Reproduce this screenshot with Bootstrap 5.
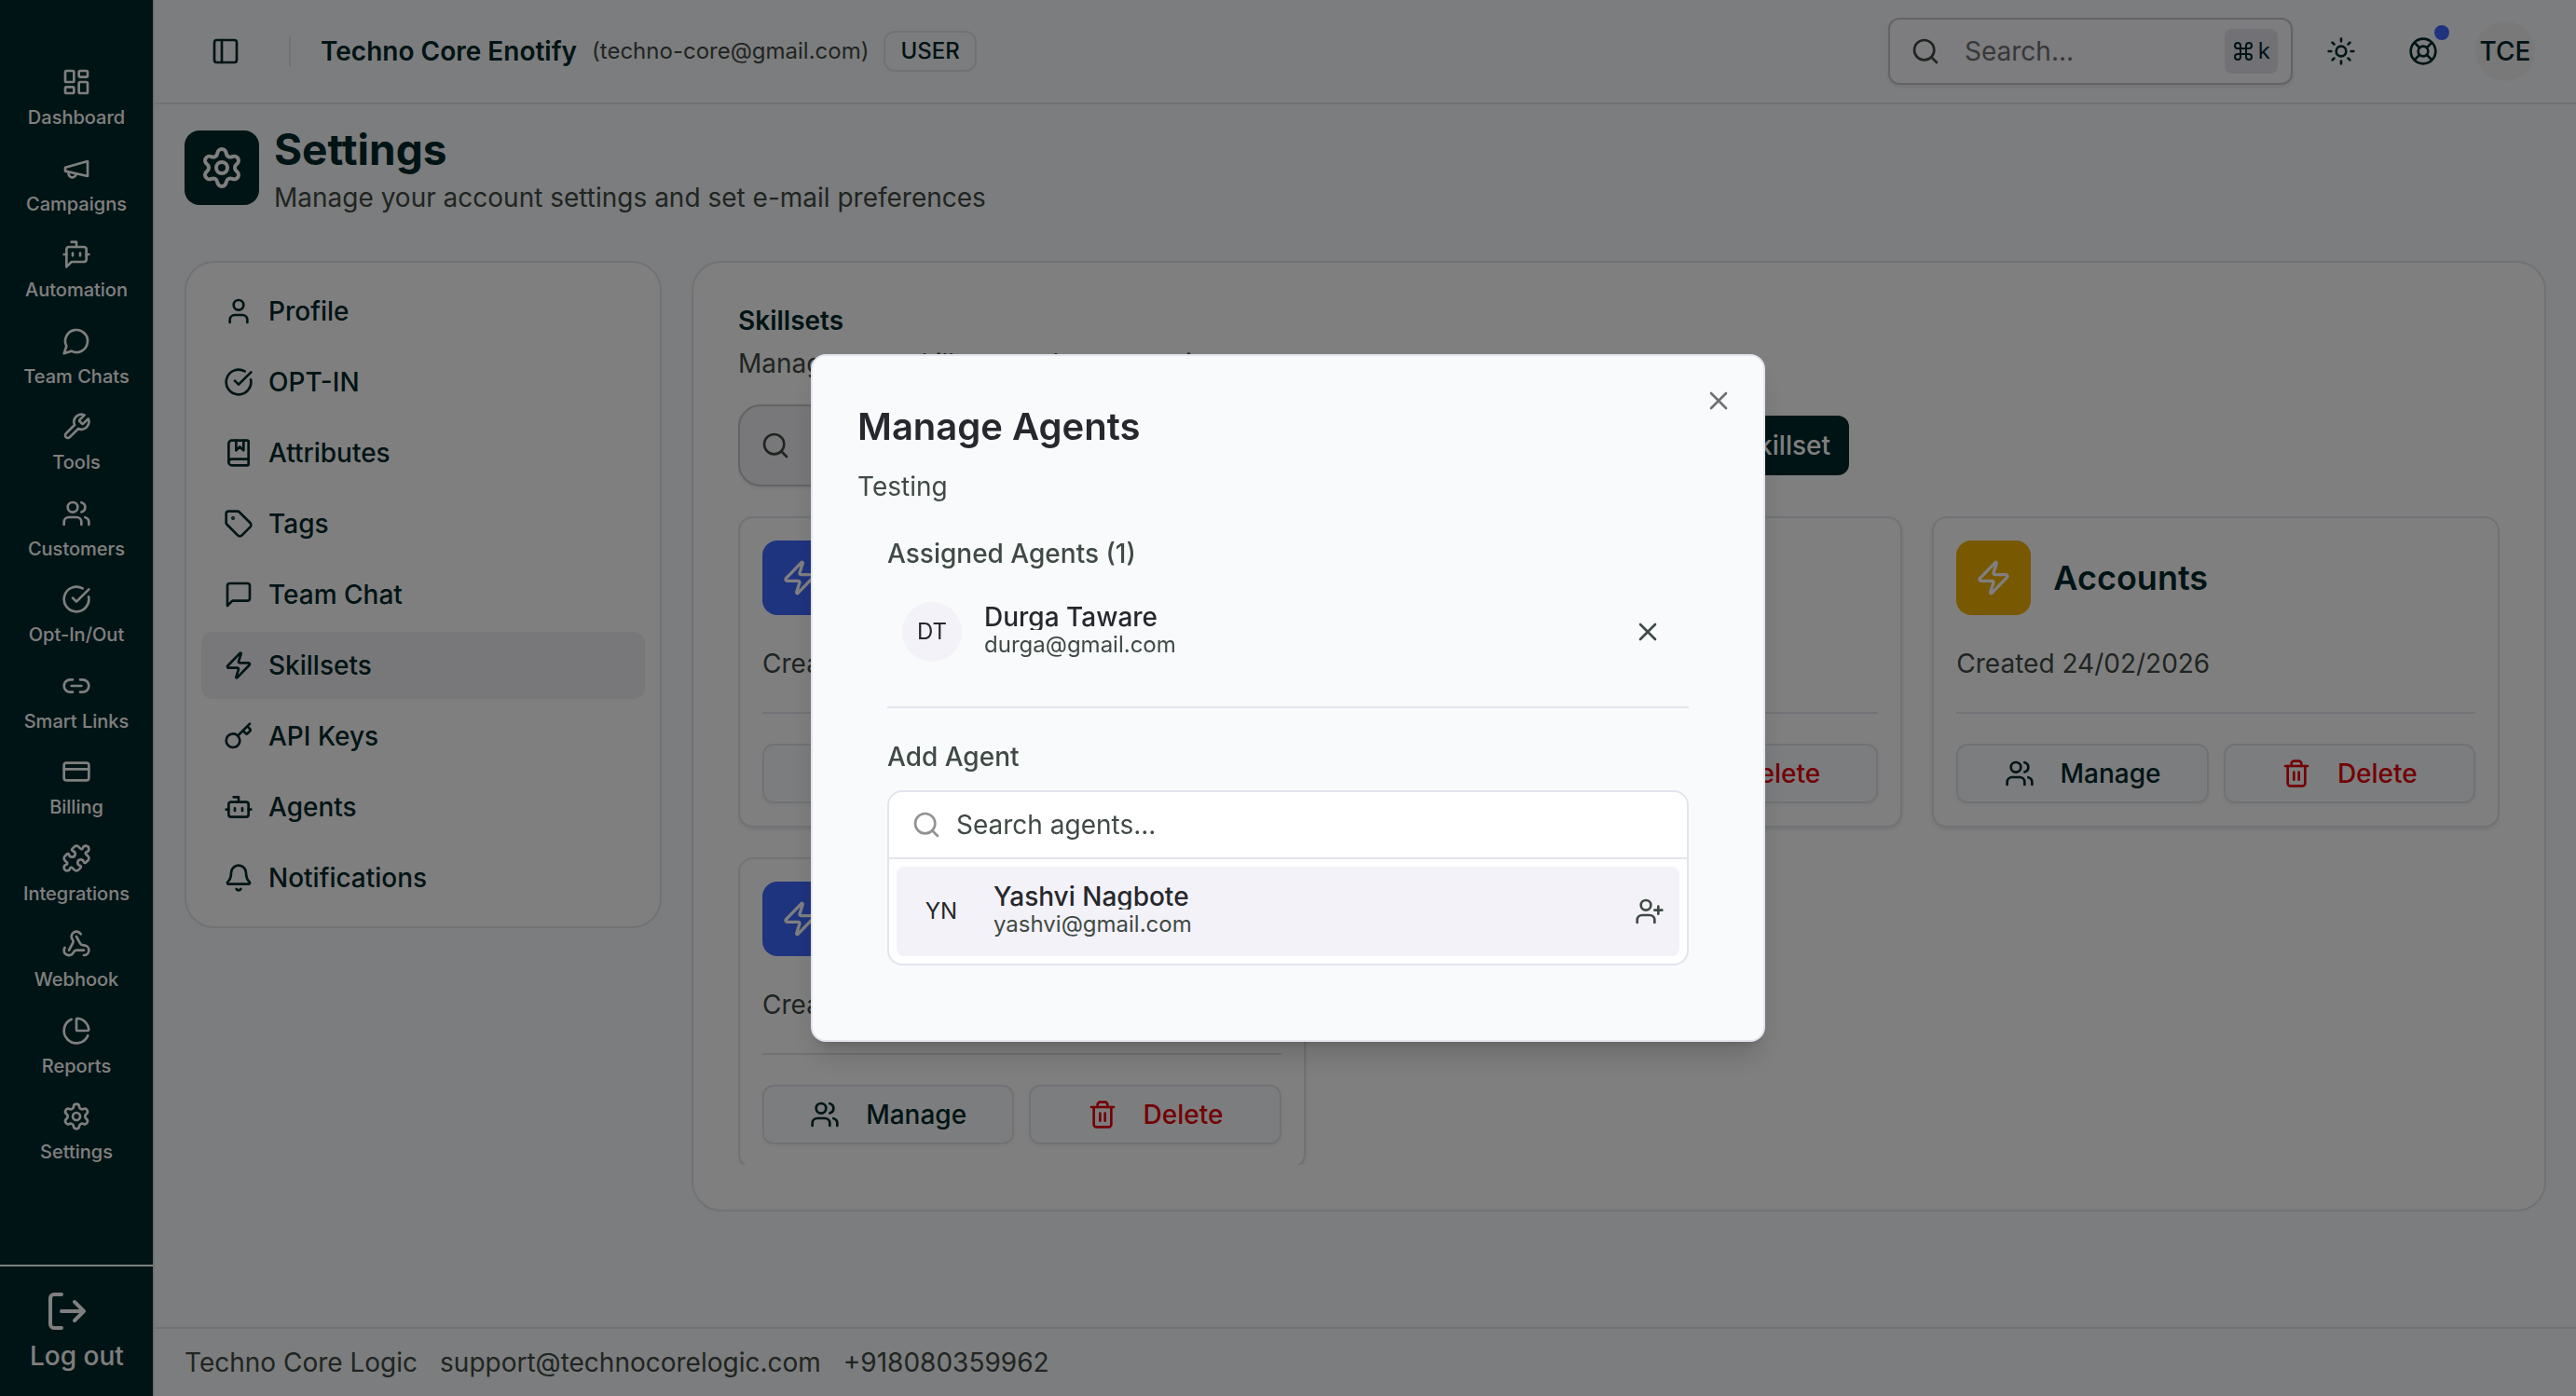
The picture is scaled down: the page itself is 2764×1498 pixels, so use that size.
<!DOCTYPE html>
<html lang="en">
<head>
<meta charset="utf-8">
<meta name="viewport" content="width=device-width, initial-scale=1">
<title>Settings – Skillsets</title>
<link href="https://cdn.jsdelivr.net/npm/bootstrap@5.3.0/dist/css/bootstrap.min.css" rel="stylesheet">
<style>
:root{--ink:#01282b;--muted-ink:#404a45;--line:#e3e4ed;--page:#f8fafc;--soft:#f3f2f8;--danger-ink:#e7000b}
body{font-family:Inter,"Noto Sans",sans-serif;font-size:28px;line-height:40px;color:var(--ink);background:var(--page);overflow:hidden}
a{text-decoration:none;color:inherit}
button{font:inherit;color:inherit}
.ico{width:32px;height:32px;flex:none;fill:none;stroke:currentColor;stroke-width:2;stroke-linecap:round;stroke-linejoin:round}
.ico-lg{width:48px;height:48px}
.skill-ico{width:40px;height:40px}
.w500{font-weight:500}
.muted{color:var(--muted-ink)}
.fs-24{font-size:24px;line-height:32px}
.shell{height:100vh}
.side{width:166px;background:var(--ink);color:#fff;border-right:2px solid var(--line);flex:none}
.side-list{padding:72px 0 82px;margin:0;list-style:none;flex:1;min-height:0}
.side-list a{font-size:20px;line-height:32px;gap:6px;font-weight:500}
.logout{border:0;border-top:2px solid #fff;background:none;padding:24px 0 12px 32px;height:141px;gap:4px}
.logout .ico{margin-left:16px}
.topbar{height:112px;border-bottom:2px solid var(--line);padding:0 44px 0 60px;flex:none}
.bare{background:none;border:0;padding:0;line-height:0}
.vr-line{width:2px;height:32px;background:var(--line);margin:0 32px 0 52px}
.role{border:2px solid var(--line);border-radius:12px;padding:4px 16px}
.field{border:2px solid #c6c6ca;background:#fbf9fc;box-shadow:0 2px 4px rgba(0,0,0,.08);flex:none}
.field input,.cmd input{border:0;background:none;outline:0;min-width:0;padding:0;color:inherit}
.field input::placeholder{color:#6f7175;opacity:1}
.cmd input::placeholder{color:var(--muted-ink);opacity:1}
.top-search{width:434px;height:72px;border-radius:12px;padding:0 14px 0 22px;gap:26px}
.top-search .ico,.main-search .ico{color:var(--muted-ink)}
.top-search .keycap .ico{color:var(--ink)}
.keycap{background:#e4e2ec;border-radius:8px;height:48px;padding:0 8px;font-size:24px;gap:4px}
.keycap .ico{width:24px;height:24px}
.top-btn{margin-left:36px}
.help{position:relative;margin:0 56px}
.help-dot{position:absolute;left:28px;top:-12px;width:16px;height:16px;border-radius:50%;background:#3f68ff}
.round{width:64px;height:64px;border-radius:50%;background:var(--soft);flex:none}
.topbar .round{margin-left:-16px;background:#f4f2f3}
.content-area{padding:16px 32px 0;flex:1;min-height:0}
.tile{width:80px;height:80px;border-radius:16px;color:#fff;background:var(--ink);flex:none}
.page-title{font-size:46px;line-height:64px;font-weight:700;margin:0}
.body-row{gap:32px}
.panel{background:#fff;border:2px solid var(--line);border-radius:32px}
.menu-panel{width:512px;padding:16px;flex:none}
.menu-panel a{height:72px;padding:0 24px;gap:16px;border-radius:12px}
.menu-panel a.active{background:#f1f1f5}
.skills-panel{flex:1;min-width:0;padding:48px;height:calc(100vh - 478px)}
.clip{overflow:hidden;height:100%}
.heading-sm{font-size:28px;line-height:28px;font-weight:600;margin:0 0 12px}
.tools{gap:16px;margin-bottom:32px}
.main-search{width:896px;height:88px;border-radius:24px;padding:0 22px;gap:24px;background:#f1f0f4}
.add-slot{width:280px}
.btn-ink{background:var(--ink);color:#fff;border:0;border-radius:12px;height:64px;padding:0 20px;gap:16px}
.skill-grid{display:grid;grid-template-columns:repeat(3,minmax(0,1fr));gap:32px}
.skill{border:2px solid var(--line);border-radius:16px;padding:24px;box-shadow:0 2px 4px rgba(0,0,0,.1)}
.skill h3{font-size:36px;line-height:40px;font-weight:600;margin:0}
.skill-date{margin:32px 0}
.skill-actions{border-top:2px solid var(--line);padding-top:32px}
.btn-line{background:var(--page);border:2px solid var(--line);border-radius:12px;height:64px;gap:28px;flex:1;padding:0;box-shadow:0 2px 4px rgba(0,0,0,.05)}
.btn-line.del{color:var(--danger-ink)}
.foot{border-top:2px solid var(--line);height:74px;padding:0 32px;gap:24px;flex:none;background:var(--page)}
.agents-dialog{max-width:1024px;--bs-modal-margin:0px}
.agents-dialog .modal-content{background:#f8fafc;border:2px solid var(--line);border-radius:16px;padding:48px;color:#26282d;box-shadow:0 20px 30px -6px rgba(0,0,0,.16),0 8px 12px -8px rgba(0,0,0,.16)}
.modal-close{position:absolute;right:32px;top:32px;color:#6f7073}
.agents-dialog h2{font-size:40px;line-height:56px;font-weight:600;margin:0 0 16px}
.agents-body{padding:32px}
.agent{padding:16px;gap:24px}
.agent-name{line-height:28px;overflow:hidden;font-weight:500}
.remove-agent{margin-right:12px}
.sep{height:2px;background:var(--line);margin:32px 0}
.cmd{background:#fff;border:2px solid var(--line);border-radius:16px;margin-top:16px;overflow:hidden}
.cmd-row{height:72px;border-bottom:2px solid var(--line);padding:0 24px;gap:16px}
.cmd-row .ico{opacity:.5}
.cmd-item{background:var(--soft);border:0;border-radius:8px;margin:8px;text-align:left}
</style>
<script src="https://cdn.jsdelivr.net/npm/bootstrap@5.3.0/dist/js/bootstrap.bundle.min.js"></script>
</head>
<body>
<svg width="0" height="0" class="d-none" aria-hidden="true">
<symbol id="i-dash" viewBox="0 0 24 24"><rect width="7" height="9" x="3" y="3" rx="1"/><rect width="7" height="5" x="14" y="3" rx="1"/><rect width="7" height="9" x="14" y="12" rx="1"/><rect width="7" height="5" x="3" y="16" rx="1"/></symbol>
<symbol id="i-mega" viewBox="0 0 24 24"><path d="m3 11 18-5v12L3 14v-3z"/><path d="M11.6 16.8a3 3 0 1 1-5.8-1.6"/></symbol>
<symbol id="i-botmsg" viewBox="0 0 24 24"><path d="M12 6V2H8"/><path d="m8 18-4 4V8a2 2 0 0 1 2-2h12a2 2 0 0 1 2 2v8a2 2 0 0 1-2 2Z"/><path d="M2 12h2M9 11v2M15 11v2M20 12h2"/></symbol>
<symbol id="i-chat" viewBox="0 0 24 24"><path d="M7.9 20A9 9 0 1 0 4 16.1L2 22Z"/></symbol>
<symbol id="i-wrench" viewBox="0 0 24 24"><path d="M14.7 6.3a1 1 0 0 0 0 1.4l1.6 1.6a1 1 0 0 0 1.4 0l3.77-3.77a6 6 0 0 1-7.94 7.94l-6.91 6.91a2.12 2.12 0 0 1-3-3l6.91-6.91a6 6 0 0 1 7.94-7.94l-3.76 3.76z"/></symbol>
<symbol id="i-users" viewBox="0 0 24 24"><path d="M16 21v-2a4 4 0 0 0-4-4H6a4 4 0 0 0-4 4v2"/><circle cx="9" cy="7" r="4"/><path d="M22 21v-2a4 4 0 0 0-3-3.87"/><path d="M16 3.13a4 4 0 0 1 0 7.75"/></symbol>
<symbol id="i-check" viewBox="0 0 24 24"><path d="M21.801 10A10 10 0 1 1 17 3.335"/><path d="m9 11 3 3L22 4"/></symbol>
<symbol id="i-link" viewBox="0 0 24 24"><path d="M9 17H7A5 5 0 0 1 7 7h2"/><path d="M15 7h2a5 5 0 1 1 0 10h-2"/><path d="M8 12h8"/></symbol>
<symbol id="i-card" viewBox="0 0 24 24"><rect width="20" height="14" x="2" y="5" rx="2"/><path d="M2 10h20"/></symbol>
<symbol id="i-puzzle" viewBox="0 0 24 24"><path d="M15.39 4.39a1 1 0 0 0 1.68-.474 2.5 2.5 0 1 1 3.014 3.015 1 1 0 0 0-.474 1.68l1.683 1.682a2.414 2.414 0 0 1 0 3.414L19.61 15.39a1 1 0 0 1-1.68-.474 2.5 2.5 0 1 0-3.014 3.015 1 1 0 0 1 .474 1.68l-1.683 1.682a2.414 2.414 0 0 1-3.414 0L8.61 19.61a1 1 0 0 0-1.68.474 2.5 2.5 0 1 1-3.014-3.015 1 1 0 0 0 .474-1.68l-1.683-1.682a2.414 2.414 0 0 1 0-3.414L4.39 8.61a1 1 0 0 1 1.68.474 2.5 2.5 0 1 0 3.014-3.015 1 1 0 0 1-.474-1.68l1.683-1.682a2.414 2.414 0 0 1 3.414 0z"/></symbol>
<symbol id="i-hook" viewBox="0 0 24 24"><path d="M18 16.98h-5.99c-1.1 0-1.95.94-2.48 1.9A4 4 0 0 1 2 17c.01-.7.2-1.4.57-2"/><path d="m6 17 3.13-5.78c.53-.97.1-2.18-.5-3.1a4 4 0 1 1 6.89-4.06"/><path d="m12 6 3.13 5.73C15.66 12.7 16.9 13 18 13a4 4 0 0 1 0 8"/></symbol>
<symbol id="i-pie" viewBox="0 0 24 24"><path d="M21 12c.552 0 1.005-.449.95-.998a10 10 0 0 0-8.953-8.951c-.55-.055-.998.398-.998.95v8a1 1 0 0 0 1 1z"/><path d="M21.21 15.89A10 10 0 1 1 8 2.83"/></symbol>
<symbol id="i-gear" viewBox="0 0 24 24"><path d="M9.671 4.136a2.34 2.34 0 0 1 4.659 0 2.34 2.34 0 0 0 3.319 1.915 2.34 2.34 0 0 1 2.33 4.033 2.34 2.34 0 0 0 0 3.831 2.34 2.34 0 0 1-2.33 4.033 2.34 2.34 0 0 0-3.319 1.915 2.34 2.34 0 0 1-4.659 0 2.34 2.34 0 0 0-3.32-1.915 2.34 2.34 0 0 1-2.33-4.033 2.34 2.34 0 0 0 0-3.831A2.34 2.34 0 0 1 6.35 6.051a2.34 2.34 0 0 0 3.319-1.915"/><circle cx="12" cy="12" r="3"/></symbol>
<symbol id="i-out" viewBox="0 0 24 24"><path d="M9 21H5a2 2 0 0 1-2-2V5a2 2 0 0 1 2-2h4"/><path d="m16 17 5-5-5-5M21 12H9"/></symbol>
<symbol id="i-panel" viewBox="0 0 24 24"><rect width="18" height="18" x="3" y="3" rx="2"/><path d="M9 3v18"/></symbol>
<symbol id="i-search" viewBox="0 0 24 24"><circle cx="11" cy="11" r="8"/><path d="m21 21-4.3-4.3"/></symbol>
<symbol id="i-cmd" viewBox="0 0 24 24"><path d="M15 6v12a3 3 0 1 0 3-3H6a3 3 0 1 0 3 3V6a3 3 0 1 0-3 3h12a3 3 0 1 0-3-3"/></symbol>
<symbol id="i-sun" viewBox="0 0 24 24"><circle cx="12" cy="12" r="4"/><path d="M12 2v2M12 20v2M4.93 4.93l1.41 1.41M17.66 17.66l1.41 1.41M2 12h2M20 12h2M6.34 17.66l-1.41 1.41M19.07 4.93l-1.41 1.41"/></symbol>
<symbol id="i-buoy" viewBox="0 0 24 24"><circle cx="12" cy="12" r="10"/><path d="m4.93 4.93 4.24 4.24M14.83 9.17l4.24-4.24M14.83 14.83l4.24 4.24M9.17 14.83l-4.24 4.24"/><circle cx="12" cy="12" r="4"/></symbol>
<symbol id="i-user" viewBox="0 0 24 24"><path d="M19 21v-2a4 4 0 0 0-4-4H9a4 4 0 0 0-4 4v2"/><circle cx="12" cy="7" r="4"/></symbol>
<symbol id="i-book" viewBox="0 0 24 24"><path d="M10 2v8l3-3 3 3V2"/><path d="M4 19.5v-15A2.5 2.5 0 0 1 6.5 2H19a1 1 0 0 1 1 1v18a1 1 0 0 1-1 1H6.5a1 1 0 0 1 0-5H20"/></symbol>
<symbol id="i-tag" viewBox="0 0 24 24"><path d="M12.586 2.586A2 2 0 0 0 11.172 2H4a2 2 0 0 0-2 2v7.172a2 2 0 0 0 .586 1.414l8.704 8.704a2.426 2.426 0 0 0 3.42 0l6.58-6.58a2.426 2.426 0 0 0 0-3.42z"/><circle cx="7.5" cy="7.5" r=".5" fill="currentColor"/></symbol>
<symbol id="i-msg" viewBox="0 0 24 24"><path d="M21 15a2 2 0 0 1-2 2H7l-4 4V5a2 2 0 0 1 2-2h14a2 2 0 0 1 2 2z"/></symbol>
<symbol id="i-zap" viewBox="0 0 24 24"><path d="M4 14a1 1 0 0 1-.78-1.63l9.9-10.2a.5.5 0 0 1 .86.46l-1.92 6.02A1 1 0 0 0 13 10h7a1 1 0 0 1 .78 1.63l-9.9 10.2a.5.5 0 0 1-.86-.46l1.92-6.02A1 1 0 0 0 11 14z"/></symbol>
<symbol id="i-key" viewBox="0 0 24 24"><path d="m15.5 7.5 2.3 2.3a1 1 0 0 0 1.4 0l2.1-2.1a1 1 0 0 0 0-1.4L19 4"/><path d="m21 2-9.6 9.6"/><circle cx="7.5" cy="15.5" r="5.5"/></symbol>
<symbol id="i-bot" viewBox="0 0 24 24"><path d="M12 8V4H8"/><rect width="16" height="12" x="4" y="8" rx="2"/><path d="M2 14h2M20 14h2M15 13v2M9 13v2"/></symbol>
<symbol id="i-bell" viewBox="0 0 24 24"><path d="M10.268 21a2 2 0 0 0 3.464 0"/><path d="M3.262 15.326A1 1 0 0 0 4 17h16a1 1 0 0 0 .74-1.673C19.41 13.956 18 12.499 18 8A6 6 0 0 0 6 8c0 4.499-1.411 5.956-2.738 7.326"/></symbol>
<symbol id="i-trash" viewBox="0 0 24 24"><path d="M3 6h18"/><path d="M19 6v14c0 1-1 2-2 2H7c-1 0-2-1-2-2V6"/><path d="M8 6V4c0-1 1-2 2-2h4c1 0 2 1 2 2v2"/><path d="M10 11v6M14 11v6"/></symbol>
<symbol id="i-x" viewBox="0 0 24 24"><path d="M18 6 6 18M6 6l12 12"/></symbol>
<symbol id="i-plus" viewBox="0 0 24 24"><path d="M5 12h14M12 5v14"/></symbol>
<symbol id="i-userplus" viewBox="0 0 24 24"><path d="M16 21v-2a4 4 0 0 0-4-4H6a4 4 0 0 0-4 4v2"/><circle cx="9" cy="7" r="4"/><path d="M19 8v6M22 11h-6"/></symbol>
</svg>

<div class="shell d-flex">
  <nav class="side d-flex flex-column" aria-label="Main">
    <ul class="side-list d-flex flex-column">
      <li class="flex-fill"><a href="#" class="d-flex flex-column align-items-center"><svg class="ico"><use href="#i-dash"/></svg>Dashboard</a></li>
      <li class="flex-fill"><a href="#" class="d-flex flex-column align-items-center"><svg class="ico"><use href="#i-mega"/></svg>Campaigns</a></li>
      <li class="flex-fill"><a href="#" class="d-flex flex-column align-items-center"><svg class="ico"><use href="#i-botmsg"/></svg>Automation</a></li>
      <li class="flex-fill"><a href="#" class="d-flex flex-column align-items-center"><svg class="ico"><use href="#i-chat"/></svg>Team Chats</a></li>
      <li class="flex-fill"><a href="#" class="d-flex flex-column align-items-center"><svg class="ico"><use href="#i-wrench"/></svg>Tools</a></li>
      <li class="flex-fill"><a href="#" class="d-flex flex-column align-items-center"><svg class="ico"><use href="#i-users"/></svg>Customers</a></li>
      <li class="flex-fill"><a href="#" class="d-flex flex-column align-items-center"><svg class="ico"><use href="#i-check"/></svg>Opt-In/Out</a></li>
      <li class="flex-fill"><a href="#" class="d-flex flex-column align-items-center"><svg class="ico"><use href="#i-link"/></svg>Smart Links</a></li>
      <li class="flex-fill"><a href="#" class="d-flex flex-column align-items-center"><svg class="ico"><use href="#i-card"/></svg>Billing</a></li>
      <li class="flex-fill"><a href="#" class="d-flex flex-column align-items-center"><svg class="ico"><use href="#i-puzzle"/></svg>Integrations</a></li>
      <li class="flex-fill"><a href="#" class="d-flex flex-column align-items-center"><svg class="ico"><use href="#i-hook"/></svg>Webhook</a></li>
      <li class="flex-fill"><a href="#" class="d-flex flex-column align-items-center"><svg class="ico"><use href="#i-pie"/></svg>Reports</a></li>
      <li class="flex-fill"><a href="#" class="d-flex flex-column align-items-center"><svg class="ico"><use href="#i-gear"/></svg>Settings</a></li>
    </ul>
    <button type="button" class="logout d-flex flex-column align-items-start w500"><svg class="ico ico-lg"><use href="#i-out"/></svg>Log out</button>
  </nav>

  <div class="d-flex flex-column flex-grow-1">
    <header class="topbar d-flex align-items-center">
      <button type="button" class="bare" aria-label="Toggle sidebar"><svg class="ico"><use href="#i-panel"/></svg></button>
      <div class="vr-line"></div>
      <div class="d-flex align-items-center gap-3">
        <span class="fw-semibold">Techno Core Enotify</span>
        <span class="fs-24 muted">(techno-core@gmail.com)</span>
        <span class="role fs-24 w500">USER</span>
      </div>
      <div class="d-flex align-items-center ms-auto">
        <label class="field top-search d-flex align-items-center"><svg class="ico"><use href="#i-search"/></svg><input type="search" class="flex-grow-1" placeholder="Search..." aria-label="Search"><span class="keycap d-flex align-items-center"><svg class="ico"><use href="#i-cmd"/></svg>k</span></label>
        <button type="button" class="bare top-btn" aria-label="Toggle theme"><svg class="ico"><use href="#i-sun"/></svg></button>
        <button type="button" class="bare help" aria-label="Help"><svg class="ico"><use href="#i-buoy"/></svg><span class="help-dot"></span></button>
        <button type="button" class="bare round w500">TCE</button>
      </div>
    </header>

    <main class="content-area">
      <div class="d-flex align-items-center gap-3 mb-5">
        <div class="tile d-flex align-items-center justify-content-center"><svg class="ico ico-lg"><use href="#i-gear"/></svg></div>
        <div>
          <h1 class="page-title">Settings</h1>
          <p class="m-0 muted">Manage your account settings and set e-mail preferences</p>
        </div>
      </div>
      <div class="d-flex align-items-start body-row">
        <nav class="panel menu-panel d-flex flex-column gap-1 w500" aria-label="Settings">
          <a href="#" class="d-flex align-items-center"><svg class="ico"><use href="#i-user"/></svg>Profile</a>
          <a href="#" class="d-flex align-items-center"><svg class="ico"><use href="#i-check"/></svg>OPT-IN</a>
          <a href="#" class="d-flex align-items-center"><svg class="ico"><use href="#i-book"/></svg>Attributes</a>
          <a href="#" class="d-flex align-items-center"><svg class="ico"><use href="#i-tag"/></svg>Tags</a>
          <a href="#" class="d-flex align-items-center"><svg class="ico"><use href="#i-msg"/></svg>Team Chat</a>
          <a href="#" class="d-flex align-items-center active"><svg class="ico"><use href="#i-zap"/></svg>Skillsets</a>
          <a href="#" class="d-flex align-items-center"><svg class="ico"><use href="#i-key"/></svg>API Keys</a>
          <a href="#" class="d-flex align-items-center"><svg class="ico"><use href="#i-bot"/></svg>Agents</a>
          <a href="#" class="d-flex align-items-center"><svg class="ico"><use href="#i-bell"/></svg>Notifications</a>
        </nav>
        <section class="panel skills-panel">
          <div class="clip">
            <h2 class="heading-sm">Skillsets</h2>
            <p class="muted mb-4">Manage your skillsets and agent assignments</p>
            <div class="d-flex align-items-center tools">
              <label class="field main-search d-flex align-items-center"><svg class="ico"><use href="#i-search"/></svg><input type="search" class="flex-grow-1" aria-label="Search skillsets"></label>
              <div class="add-slot d-flex justify-content-end"><button type="button" class="btn-ink d-flex align-items-center w500"><svg class="ico"><use href="#i-plus"/></svg>Add Skillset</button></div>
            </div>
            <div class="skill-grid" id="skills"></div>
          </div>
        </section>
      </div>
    </main>

    <footer class="foot d-flex align-items-center muted">
      <span>Techno Core Logic</span><span>support@technocorelogic.com</span><span>+918080359962</span>
    </footer>
  </div>
</div>

<div class="modal-backdrop show"></div>
<div class="modal d-block" tabindex="-1" role="dialog" aria-labelledby="dlgTitle">
  <div class="modal-dialog modal-dialog-centered agents-dialog">
    <div class="modal-content">
      <button type="button" class="bare modal-close" aria-label="Close"><svg class="ico"><use href="#i-x"/></svg></button>
      <h2 id="dlgTitle">Manage Agents</h2>
      <p class="m-0 muted">Testing</p>
      <div class="agents-body">
        <div class="w500 muted">Assigned Agents (1)</div>
        <div class="agent d-flex align-items-center mt-3">
          <span class="round fs-24 d-flex align-items-center justify-content-center">DT</span>
          <span class="flex-grow-1"><span class="agent-name d-block">Durga Taware</span><span class="fs-24 muted d-block">durga@gmail.com</span></span>
          <button type="button" class="bare remove-agent muted" aria-label="Remove Durga Taware"><svg class="ico"><use href="#i-x"/></svg></button>
        </div>
        <div class="sep"></div>
        <label class="w500 muted d-block" for="agentSearch">Add Agent</label>
        <div class="cmd">
          <div class="cmd-row d-flex align-items-center"><svg class="ico"><use href="#i-search"/></svg><input type="text" id="agentSearch" class="flex-grow-1" placeholder="Search agents..."></div>
          <div class="d-flex"><button type="button" class="agent cmd-item d-flex align-items-center flex-grow-1">
            <span class="round fs-24 d-flex align-items-center justify-content-center">YN</span>
            <span class="flex-grow-1"><span class="agent-name d-block">Yashvi Nagbote</span><span class="fs-24 muted d-block">yashvi@gmail.com</span></span>
            <svg class="ico muted"><use href="#i-userplus"/></svg>
          </button></div>
        </div>
      </div>
    </div>
  </div>
</div>

<script>
const skills=[["Testing","#3f68ff"],["Support","#3f68ff"],["Accounts","#f0b100"],["Sales","#3f68ff"]];
document.getElementById("skills").innerHTML=skills.map(([name,color])=>`
<article class="skill">
  <div class="d-flex align-items-center gap-4"><div class="tile d-flex align-items-center justify-content-center" style="background:${color}"><svg class="ico skill-ico"><use href="#i-zap"/></svg></div><h3>${name}</h3></div>
  <p class="skill-date muted">Created 24/02/2026</p>
  <div class="skill-actions d-flex gap-3">
    <button type="button" class="btn-line w500 d-flex align-items-center justify-content-center"><svg class="ico"><use href="#i-users"/></svg>Manage</button>
    <button type="button" class="btn-line del w500 d-flex align-items-center justify-content-center"><svg class="ico"><use href="#i-trash"/></svg>Delete</button>
  </div>
</article>`).join("");
</script>
</body>
</html>
